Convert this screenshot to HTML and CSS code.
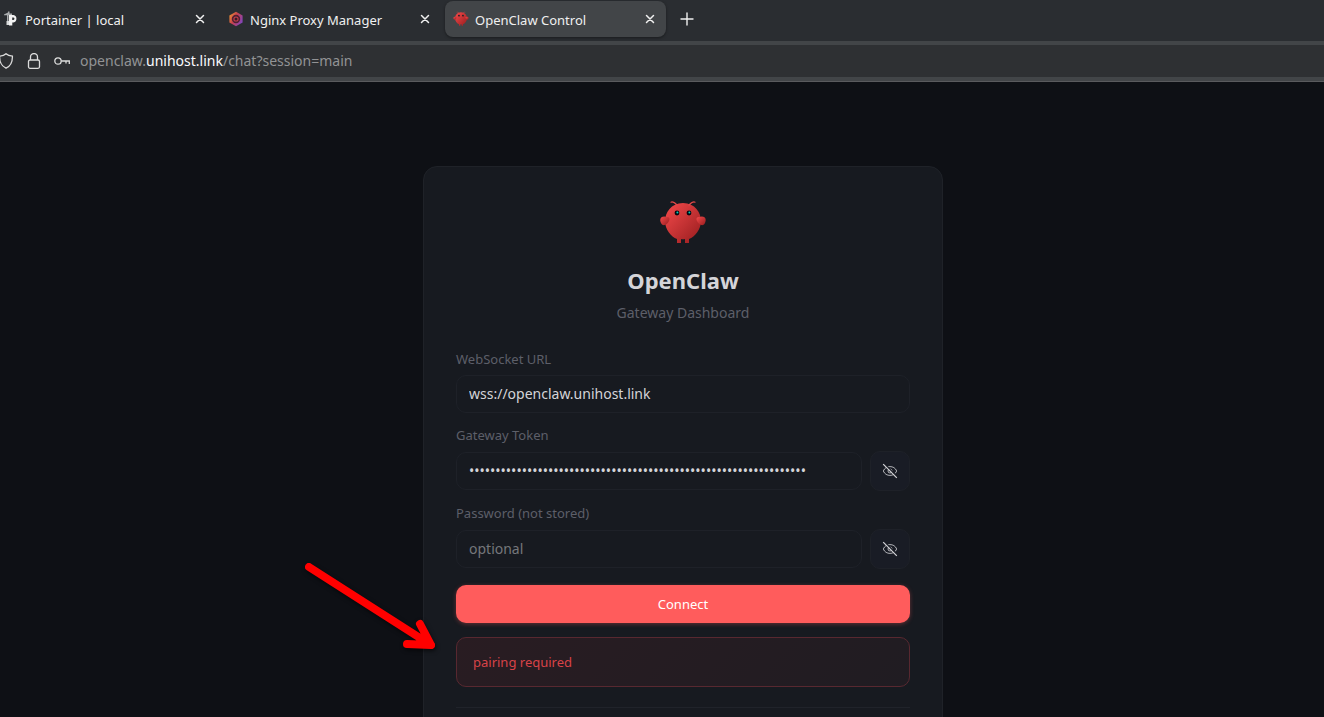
FILE: index.html
```html
<!DOCTYPE html>
<html lang="en">
<head>
    <meta charset="UTF-8">
    <meta name="viewport" content="width=device-width, initial-scale=1.0">
    <title>OpenClaw Control</title>
    <link rel="stylesheet" href="styles.css">
</head>
<body>
    <!-- Shared shapes -->
    <svg class="defs" aria-hidden="true">
        <defs>
            <linearGradient id="lobster" x1="0%" y1="0%" x2="100%" y2="100%">
                <stop offset="0%" stop-color="#f54a4b"/>
                <stop offset="100%" stop-color="#971c1e"/>
            </linearGradient>
            <linearGradient id="nginx" x1="0%" y1="0%" x2="100%" y2="60%">
                <stop offset="0%" stop-color="#f0a02a"/>
                <stop offset="50%" stop-color="#c8404f"/>
                <stop offset="100%" stop-color="#8444b8"/>
            </linearGradient>
            <symbol id="claw" viewBox="0 0 120 120">
                <path d="M60 10C30 10 15 35 15 55C15 75 30 95 45 100V110H55V100C55 100 60 102 65 100V110H75V100C90 95 105 75 105 55C105 35 90 10 60 10Z" fill="url(#lobster)"/>
                <path d="M20 45C5 40 0 50 5 60C10 70 20 65 25 55C28 48 25 45 20 45Z" fill="url(#lobster)"/>
                <path d="M100 45C115 40 120 50 115 60C110 70 100 65 95 55C92 48 95 45 100 45Z" fill="url(#lobster)"/>
                <path d="M45 15Q35 5 30 8M75 15Q85 5 90 8" fill="none" stroke="#e04848" stroke-width="3" stroke-linecap="round"/>
                <circle cx="45" cy="35" r="6" fill="#050810"/>
                <circle cx="75" cy="35" r="6" fill="#050810"/>
                <circle cx="46" cy="34" r="2.5" fill="#00d0bc"/>
                <circle cx="76" cy="34" r="2.5" fill="#00d0bc"/>
            </symbol>
            <symbol id="close" viewBox="0 0 16 16">
                <path d="M4.5 4.5L11.5 11.5M11.5 4.5L4.5 11.5" fill="none" stroke="currentColor" stroke-width="1.5" stroke-linecap="round"/>
            </symbol>
            <symbol id="eye-off" viewBox="0 0 16 16">
                <path d="M1.3 8C2.6 4.9 5.2 3.6 8 3.6S13.400 4.900 14.700 8C13.400 11.100 10.800 12.400 8 12.400S2.600 11.100 1.300 8Z" fill="none" stroke="currentColor" stroke-opacity=".8"/>
                <circle cx="8" cy="8" r="2" fill="none" stroke="currentColor" stroke-opacity=".8"/>
                <path d="M2.2 .6L15.800 14.200" stroke="#191c25" stroke-width="1.4"/>
                <path d="M1.2 1.200L14.800 14.800" stroke="currentColor" stroke-width="1.2"/>
            </symbol>
        </defs>
    </svg>

    <header class="browser">
        <nav class="tabs">
            <div class="tab">
                <svg class="favicon" viewBox="0 0 16 16">
                    <path d="M1 3.5L5 1.500V.5H6.500V2.500H9V4.200H5.500V13H4V4.200H1Z" fill="#a9acae"/>
                    <path d="M6 4H10.500A3.800 3.800 0 0 1 10.500 11.400H9.300V14.500H6Z" fill="#f2f2f2"/>
                    <path d="M9.200 6.500H10.200A1.200 1.200 0 0 1 10.200 8.900H9.200Z" fill="#2a2d30"/>
                    <path d="M3.500 10H6V14H3.500Z" fill="#d8dadb"/>
                </svg>
                <span class="tab-title">Portainer | local</span>
                <button class="tab-close" aria-label="Close tab"><svg><use href="#close"/></svg></button>
            </div>
            <div class="tab">
                <svg class="favicon" viewBox="0 0 16 16">
                    <path d="M8 .8L14.6 4.4V11.6L8 15.2L1.4 11.6V4.4Z" fill="url(#nginx)"/>
                    <circle cx="8" cy="8" r="3.400" fill="#c43c4c" stroke="#4d2032" stroke-width="1.6"/>
                    <circle cx="8" cy="8" r="1.500" fill="#351d28"/>
                </svg>
                <span class="tab-title">Nginx Proxy Manager</span>
                <button class="tab-close" aria-label="Close tab"><svg><use href="#close"/></svg></button>
            </div>
            <div class="tab active">
                <svg class="favicon"><use href="#claw"/></svg>
                <span class="tab-title">OpenClaw Control</span>
                <button class="tab-close" aria-label="Close tab"><svg><use href="#close"/></svg></button>
            </div>
            <button class="new-tab" aria-label="New tab">
                <svg viewBox="0 0 16 16"><path d="M8 2V14M2 8H14" stroke="currentColor" stroke-width="1.4" stroke-linecap="round"/></svg>
            </button>
        </nav>
        <div class="address-bar">
            <svg viewBox="0 0 16 16"><path d="M8 .8C9.5 2.2 12 3 14.4 3.1C14.6 8.5 12.5 13 8 15.2C3.5 13 1.4 8.5 1.6 3.1C4 3 6.5 2.2 8 .8Z"/></svg>
            <svg viewBox="0 0 16 16"><rect x="2.5" y="7" width="11" height="8.3" rx="1.5"/><path d="M4.5 7V4A3.5 3.5 0 0 1 11.5 4V7"/></svg>
            <svg viewBox="0 0 16 16"><circle cx="4" cy="8" r="3.2"/><path d="M7.2 8H15.3V11M12 8V10.500"/></svg>
            <a class="url" href="#">openclaw.<span class="host">unihost.link</span>/chat?session=main</a>
        </div>
    </header>

    <main class="page">
        <section class="card">
            <div class="card-header">
                <svg class="logo"><use href="#claw"/></svg>
                <h1>OpenClaw</h1>
                <p>Gateway Dashboard</p>
            </div>
            <form class="login-form">
                <div class="field">
                    <label for="wsUrl">WebSocket URL</label>
                    <input type="text" id="wsUrl" value="wss://openclaw.unihost.link">
                </div>
                <div class="field">
                    <label for="token">Gateway Token</label>
                    <div class="secret">
                        <input type="password" id="token" value="0123456789abcdef0123456789abcdef0123456789abcdef0123456789abcdef">
                        <button type="button" class="toggle" aria-label="Show token"><svg><use href="#eye-off"/></svg></button>
                    </div>
                </div>
                <div class="field">
                    <label for="password">Password (not stored)</label>
                    <div class="secret">
                        <input type="password" id="password" placeholder="optional">
                        <button type="button" class="toggle" aria-label="Show password"><svg><use href="#eye-off"/></svg></button>
                    </div>
                </div>
                <button type="button" class="connect">Connect</button>
            </form>
            <div class="error">pairing required</div>
            <hr>
        </section>
    </main>

    <svg class="arrow" viewBox="0 0 140 100" aria-hidden="true">
        <path d="M9 12L131 90M120 69L131 90L107 89"/>
    </svg>
</body>
</html>
```

FILE: styles.css
```css
* {
    box-sizing: border-box;
}
body {
    margin: 0;
    height: 100vh;
    display: flex;
    flex-direction: column;
    overflow: hidden;
    background: #0e1015;
    color: #d4d4d8;
    font-family: "Noto Sans", sans-serif;
    font-size: 14px;
    line-height: 20px;
}
button, input {
    font-family: inherit;
}
button {
    display: flex;
    align-items: center;
    justify-content: center;
    padding: 0;
    border: none;
    background: none;
    color: inherit;
    cursor: pointer;
}
.defs {
    position: absolute;
    width: 0;
    height: 0;
}

/* Browser bar */
.browser {
    flex: none;
    background: #2a2d31;
}
.tabs {
    display: flex;
    gap: 4px;
    height: 41px;
    padding: 1px 0 4px;
    margin-left: -5px;
    color: #f0f0f0;
}
.tab {
    display: flex;
    align-items: center;
    gap: 6px;
    width: 221px;
    padding: 0 8px;
    border-radius: 8px;
}
.tab.active {
    background: #424548;
    box-shadow: 0 1px 3px rgba(0,0,0,0.4);
}
.favicon {
    width: 16px;
    height: 16px;
}
.tab-title {
    flex: 1;
    padding-top: 1px;
    font-size: 13px;
    white-space: nowrap;
}
.tab-close svg,
.new-tab svg {
    width: 16px;
    height: 16px;
}
.new-tab {
    width: 34px;
}
.address-bar {
    display: flex;
    align-items: center;
    gap: 12px;
    height: 40px;
    background: #2e3033;
    border-top: 4px solid #424548;
    border-bottom: 4px solid #424548;
}
.browser {
    border-bottom: 1px solid #5a5b5e;
}
.address-bar svg {
    width: 16px;
    height: 16px;
    margin-left: -2px;
    margin-right: 2px;
    fill: none;
    stroke: #dcdcdc;
    stroke-width: 1.3;
}
.url {
    margin-left: -4px;
    color: #929395;
    text-decoration: none;
}
.host {
    color: #fbfbfe;
}

/* Login card */
.page {
    flex: 1;
    min-height: 0;
    display: flex;
    justify-content: center;
    align-items: flex-start;
    padding: 84px 0 0 42px;
}
.card {
    width: 520px;
    padding: 32px;
    background: #171a20;
    border: 1px solid #1f2228;
    border-radius: 14px;
}
.card-header {
    margin-bottom: 26px;
    text-align: center;
}
.logo {
    display: block;
    width: 48px;
    height: 48px;
    margin: 0 auto 19px;
}
h1 {
    margin: 0 0 9px;
    font-size: 22px;
    line-height: 28px;
}
p {
    margin: 0;
    color: #5d5f69;
}
.login-form {
    display: grid;
    gap: 12px;
}
.field {
    display: grid;
    gap: 6px;
}
label {
    font-size: 13px;
    color: #5d5f69;
}
input {
    width: 100%;
    min-width: 0;
    height: 38px;
    padding: 0 12px 1px;
    background: #171a20;
    border: 1px solid #1e2128;
    border-radius: 10px;
    color: #d4d4d8;
    font-size: 14px;
    outline: none;
}
input::placeholder {
    color: #75777b;
}
.secret {
    display: flex;
    align-items: center;
    gap: 8px;
}
.toggle {
    flex: none;
    width: 40px;
    height: 40px;
    background: #191c25;
    border: 1px solid #1e2128;
    border-radius: 10px;
    color: #d4d4d8;
}
.toggle svg {
    width: 16px;
    height: 16px;
}
.connect {
    height: 38px;
    margin-top: 4px;
    background: #ff5c5c;
    border-radius: 10px;
    box-shadow: 0 1px 4px rgba(255,92,92,0.35);
    color: white;
    font-size: 13px;
}
.error {
    margin-top: 14px;
    padding: 14px 16px;
    background: linear-gradient(135deg, #291c22, #201c22);
    border: 1px solid #582830;
    border-radius: 10px;
    color: #d84348;
    font-size: 13px;
}
hr {
    margin: 20px 0 0;
    border: none;
    border-top: 1px solid #20232a;
}

/* Pointer drawn over the page */
.arrow {
    position: absolute;
    left: 300px;
    top: 555px;
    width: 140px;
    height: 100px;
    fill: none;
    stroke: #ff0000;
    stroke-width: 8;
    stroke-linecap: round;
    stroke-linejoin: round;
    filter: drop-shadow(1px 2px 2px rgba(0,0,0,0.6));
}
```
